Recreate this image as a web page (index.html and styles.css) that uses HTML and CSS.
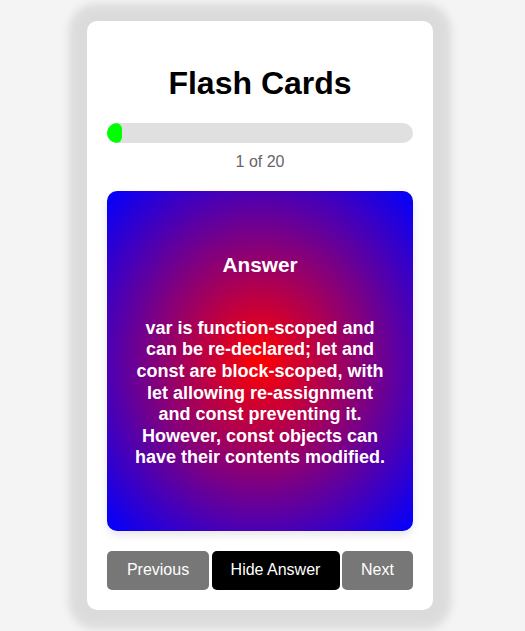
FILE: index.html
```html
<!DOCTYPE html>
<html lang="en">
<head>
<meta charset="utf-8">
<title>Flash Cards</title>
<link rel="stylesheet" href="styles.css">
</head>
<body>
  <main class="app">
    <h1 class="title">Flash Cards</h1>
    <div class="progress">
      <div class="progress-fill" style="width: 5%"></div>
    </div>
    <p class="counter">1 of 20</p>
    <section class="flashcard">
      <h2 class="card-heading">Answer</h2>
      <p class="card-text">var is function-scoped and can be re-declared; let and const are block-scoped, with let allowing re-assignment and const preventing it. However, const objects can have their contents modified.</p>
    </section>
    <div class="controls">
      <button class="btn btn-prev">Previous</button>
      <button class="btn btn-toggle">Hide Answer</button>
      <button class="btn btn-next">Next</button>
    </div>
  </main>
</body>
</html>
```
FILE: styles.css
```css
html, body {
  margin: 0;
  padding: 0;
}

body {
  background: #f4f4f4;
  font-family: "Liberation Sans", Arial, sans-serif;
  min-height: 100vh;
  display: flex;
  justify-content: center;
  align-items: center;
  padding-right: 5px;
  box-sizing: border-box;
}

.app {
  width: 346px;
  box-sizing: border-box;
  background: #fff;
  border-radius: 10px;
  padding: 22px 20px 20px;
  box-shadow: 0 1px 10px 18px rgba(0, 0, 0, 0.1);
  display: flex;
  flex-direction: column;
}

.title {
  margin: 21.44px 0;
  font-size: 32px;
  font-weight: bold;
  text-align: center;
  color: #000;
}

.progress {
  height: 20px;
  background: #e0e0e0;
  border-radius: 10px;
  overflow: hidden;
}

.progress-fill {
  height: 100%;
  background: #00ff00;
  border-radius: 6px;
}

.counter {
  margin: 10px 0 20px;
  font-size: 16px;
  color: #666;
  text-align: center;
}

.flashcard {
  height: 340px;
  box-sizing: border-box;
  padding: 0 25px;
  border-radius: 10px;
  background: radial-gradient(#ff0000, #0000ff);
  box-shadow: 0 4px 8px rgba(0, 0, 0, 0.1);
  color: #fff;
  display: flex;
  flex-direction: column;
  justify-content: center;
  align-items: center;
  text-align: center;
  gap: 41px;
}

.card-heading {
  margin: 0;
  font-size: 20.8px;
  font-weight: bold;
}

.card-text {
  margin: 0;
  font-size: 18px;
  font-weight: bold;
  line-height: 1.2;
}

.controls {
  margin-top: 20px;
  display: flex;
  justify-content: space-between;
}

.btn {
  height: 39px;
  border: none;
  border-radius: 5px;
  font-family: "Liberation Sans", Arial, sans-serif;
  font-size: 16px;
  color: #fff;
  background: #777;
  padding: 0;
  text-align: center;
}

.btn-prev { width: 102px; }
.btn-toggle { width: 128px; background: #000; }
.btn-next { width: 71px; }
```
